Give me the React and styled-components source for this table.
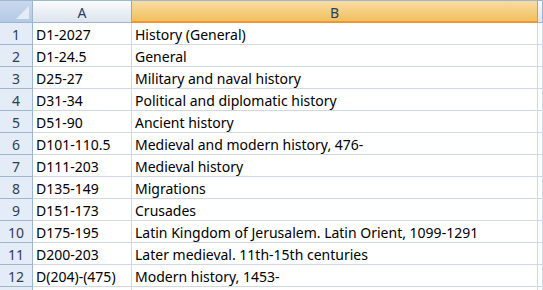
import React from "react";
import styled, { createGlobalStyle } from "styled-components";

const rows = [
  ["D1-2027", "History (General)"],
  ["D1-24.5", "General"],
  ["D25-27", "Military and naval history"],
  ["D31-34", "Political and diplomatic history"],
  ["D51-90", "Ancient history"],
  ["D101-110.5", "Medieval and modern history, 476-"],
  ["D111-203", "Medieval history"],
  ["D135-149", "Migrations"],
  ["D151-173", "Crusades"],
  ["D175-195", "Latin Kingdom of Jerusalem. Latin Orient, 1099-1291"],
  ["D200-203", "Later medieval. 11th-15th centuries"],
  ["D(204)-(475)", "Modern history, 1453-"],
];

const GlobalStyle = createGlobalStyle`
  html, body {
    margin: 0;
    padding: 0;
    background: #fff;
    overflow: hidden;
  }
  body {
    font-family: "Noto Sans", "Open Sans", sans-serif;
    font-size: 14px;
  }
`;

const Sheet = styled.div`
  display: grid;
  grid-template-columns: 33px 99px 406px 1fr;
  grid-auto-rows: 22px;
  grid-template-rows: 23px;
  width: 543px;
  height: 290px;
  overflow: hidden;
`;

const Corner = styled.div`
  position: relative;
  box-sizing: border-box;
  border-top: 1px solid #9eb6ce;
  border-right: 1px solid #9eb6ce;
  border-bottom: 1px solid #9eb6ce;
  background: linear-gradient(to bottom, #c9d9ee, #b4c9e5);

  &::after {
    content: "";
    position: absolute;
    right: 3px;
    bottom: 3px;
    width: 0;
    height: 0;
    border-left: 13px solid transparent;
    border-bottom: 13px solid #e4ecf6;
  }
`;

const ColHead = styled.div`
  box-sizing: border-box;
  display: flex;
  align-items: center;
  justify-content: center;
  padding-top: 2px;
  color: #27415f;
  border-top: 1px solid #9eb6ce;
  border-right: 1px solid ${(p) => (p.$selected ? "#f29436" : "#9eb6ce")};
  border-bottom: ${(p) => (p.$selected ? "2px solid #f29436" : "1px solid #9eb6ce")};
  background: ${(p) =>
    p.$selected
      ? "linear-gradient(to bottom, #f9dba3, #f1c15f)"
      : "linear-gradient(to bottom, #f9fbfd, #dde4ee)"};
  ${(p) => p.$leftEdge && "border-left: 1px solid #f29436; margin-left: -1px;"}
`;

const RowNum = styled.div`
  box-sizing: border-box;
  display: flex;
  align-items: center;
  justify-content: center;
  padding-top: 2px;
  color: #2c3e55;
  background: #e4ecf7;
  border-right: 1px solid #9eb6ce;
  border-bottom: 1px solid #9eb6ce;
`;

const Cell = styled.div`
  box-sizing: border-box;
  padding: 2px 0 0 3px;
  line-height: 20px;
  color: #000;
  white-space: nowrap;
  overflow: ${(p) => (p.$clip ? "hidden" : "visible")};
  border-right: 1px solid #d0d7e5;
  border-bottom: 1px solid #d0d7e5;
`;

export default function App() {
  return (
    <>
      <GlobalStyle />
      <Sheet>
        <Corner />
        <ColHead>A</ColHead>
        <ColHead $selected $leftEdge>
          B
        </ColHead>
        <ColHead />
        {rows.map(([a, b], i) => (
          <React.Fragment key={i}>
            <RowNum>{i + 1}</RowNum>
            <Cell $clip>{a}</Cell>
            <Cell>{b}</Cell>
            <Cell />
          </React.Fragment>
        ))}
        {/* row 13, only its top edge shows */}
        <RowNum />
        <Cell />
        <Cell />
        <Cell />
      </Sheet>
    </>
  );
}
